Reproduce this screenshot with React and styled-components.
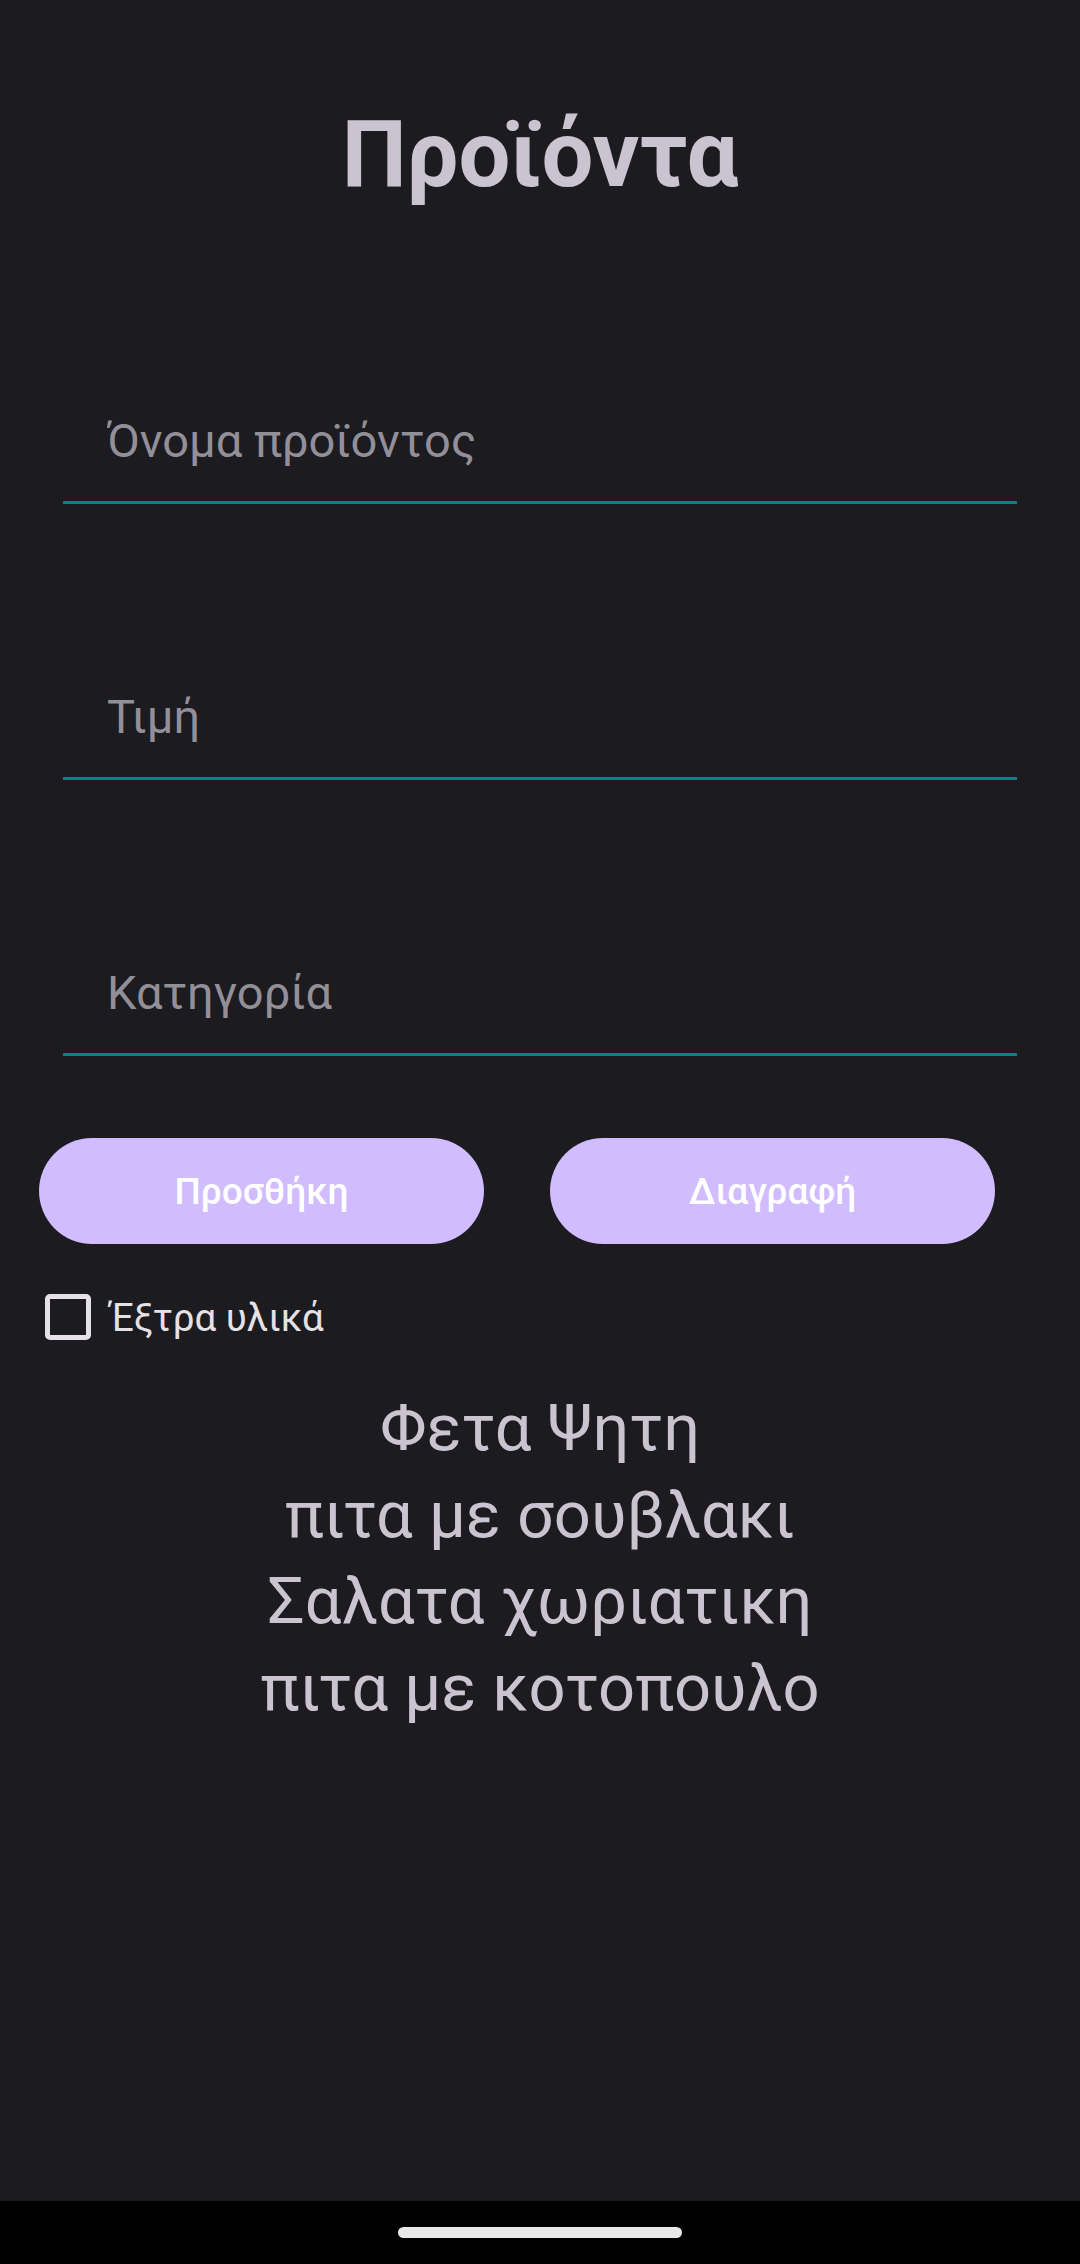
import React from 'react'
import styled, { createGlobalStyle } from 'styled-components'

const GlobalStyle = createGlobalStyle`
    html, body {
        margin: 0;
        padding: 0;
        background: #1c1b1f;
    }
    body {
        font-family: Roboto, "Noto Sans", sans-serif;
    }
    * { box-sizing: border-box; }
`;

const Screen = styled.div`
    display: flex;
    flex-direction: column;
    width: 1080px;
    height: 2264px;
    background: #1c1b1f;
    overflow: hidden;
`;
const Content = styled.main`
    flex: 1;
    display: flex;
    flex-direction: column;
`;
const Title = styled.h1`
    margin: 100px 0 0;
    text-align: center;
    font-size: 92px;
    font-weight: 700;
    line-height: 110px;
    color: #cac4d0;
`;

// Form
const Form = styled.form`
    display: flex;
    flex-direction: column;
    margin-top: 203px;
`;
const Field = styled.label`
    display: block;
    margin: ${props => props.first ? '0' : '185px'} 63px 0 63px;
    padding: 0 0 32px 44px;
    border-bottom: 3px solid #018786;
`;
const FieldInput = styled.input`
    display: block;
    width: 100%;
    height: 56px;
    padding: 0;
    border: 0;
    outline: none;
    background: transparent;
    font-family: Roboto, sans-serif;
    font-size: 47px;
    line-height: 56px;
    color: #e6e1e5;
    &::placeholder {
        color: #938f99;
    }
`;

const ButtonRow = styled.div`
    display: flex;
    gap: 66px;
    margin: 82px 0 0 39px;
`;
const PillButton = styled.button`
    width: 445px;
    height: 106px;
    border: 0;
    border-radius: 53px;
    background: #d0bcff;
    color: #ffffff;
    font-family: Roboto, sans-serif;
    font-size: 37px;
    font-weight: 500;
    cursor: pointer;
`;

const CheckRow = styled.div`
    display: flex;
    align-items: center;
    gap: 19px;
    margin: 50px 0 0 45px;
`;
const CheckBox = styled.span`
    display: block;
    width: 46px;
    height: 46px;
    border: 5px solid #e6e0e9;
    border-radius: 5px;
`;
const CheckLabel = styled.span`
    font-size: 38.5px;
    color: #e6e1e5;
`;

const ProductList = styled.ul`
    list-style: none;
    margin: 45px 0 0;
    padding: 0;
    text-align: center;
`;
const ProductItem = styled.li`
    font-size: 65px;
    line-height: 86.6px;
    color: #cac4d0;
`;

// Nav bar
const NavBar = styled.div`
    display: flex;
    align-items: center;
    justify-content: center;
    height: 63px;
    background: #000;
`;
const NavHandle = styled.span`
    display: block;
    width: 284px;
    height: 11px;
    border-radius: 6px;
    background: #e8e8e8;
`;

const products = ['Φετα Ψητη', 'πιτα με σουβλακι', 'Σαλατα χωριατικη', 'πιτα με κοτοπουλο']

const App = () => {
    return (
        <Screen>
            <GlobalStyle />
            <Content>
                <Title>Προϊόντα</Title>
                <Form onSubmit={e => e.preventDefault()}>
                    <Field first>
                        <FieldInput type='text' placeholder='Όνομα προϊόντος' />
                    </Field>
                    <Field>
                        <FieldInput type='text' placeholder='Τιμή' />
                    </Field>
                    <Field>
                        <FieldInput type='text' placeholder='Κατηγορία' />
                    </Field>
                </Form>
                <ButtonRow>
                    <PillButton type='button'>Προσθήκη</PillButton>
                    <PillButton type='button'>Διαγραφή</PillButton>
                </ButtonRow>
                <CheckRow>
                    <CheckBox />
                    <CheckLabel>Έξτρα υλικά</CheckLabel>
                </CheckRow>
                <ProductList>
                    {products.map(p => <ProductItem key={p}>{p}</ProductItem>)}
                </ProductList>
            </Content>
            <NavBar>
                <NavHandle />
            </NavBar>
        </Screen>
    )
}

export default App
